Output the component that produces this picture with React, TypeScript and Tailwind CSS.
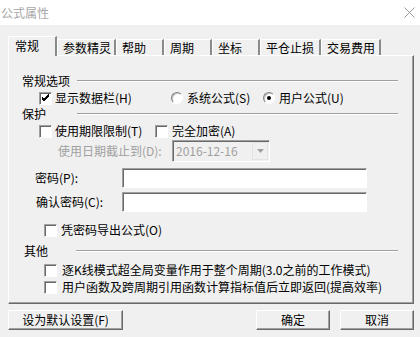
import React from "react";

const TABS = [
  { label: "常规", w: 49 },
  { label: "参数精灵", w: 59 },
  { label: "帮助", w: 48 },
  { label: "周期", w: 48 },
  { label: "坐标", w: 48 },
  { label: "平仓止损", w: 61 },
  { label: "交易费用", w: 60 },
];

function Box({ checked = false }: { checked?: boolean }) {
  return (
    <span className="flex h-[13px] w-[13px] shrink-0 items-center justify-center border border-t-[#a0a0a0] border-l-[#a0a0a0] border-b-white border-r-white bg-white shadow-[inset_1px_1px_0_#696969]">
      {checked && (
        <svg width="9" height="9" viewBox="0 0 9 9">
          <path d="M1 4 L3 6 L8 1 M1 5 L3 7 L8 2 M1 3 L3 5 L8 0" stroke="#000" strokeWidth="1" fill="none" />
        </svg>
      )}
    </span>
  );
}

function Radio({ on = false }: { on?: boolean }) {
  return (
    <span className="flex h-[12px] w-[12px] shrink-0 items-center justify-center rounded-full border border-t-[#808080] border-l-[#808080] border-b-white border-r-white bg-white shadow-[inset_1px_1px_0_#c0c0c0]">
      {on && <span className="h-[4px] w-[4px] rounded-full bg-black" />}
    </span>
  );
}

function Group({ title, ml }: { title: string; ml: number }) {
  return (
    <div className="flex h-full items-center" style={{ marginLeft: ml }}>
      <span>{title}</span>
    </div>
  );
}

function Header({ title, left, lineStart }: { title: string; left: number; lineStart: number }) {
  return (
    <div className="flex h-full items-center pr-[15px]">
      <span className="shrink-0" style={{ marginLeft: left - 9, width: lineStart - left }}>
        {title}
      </span>
      <span className="h-[2px] flex-1 border-t border-b border-t-[#a0a0a0] border-b-white" />
    </div>
  );
}

const raised =
  "border border-t-white border-l-white border-r-[#696969] border-b-[#696969] shadow-[inset_-1px_-1px_0_#a0a0a0]";
const sunken =
  "border border-t-[#a0a0a0] border-l-[#a0a0a0] border-b-white border-r-white shadow-[inset_1px_1px_0_#696969]";

export default function App() {
  return (
    <div className="relative h-[337px] w-[420px] overflow-hidden bg-[#f0f0f0] font-['Noto_Sans_CJK_SC',sans-serif] text-[12px] leading-[14px] text-black">
      {/* 标题栏 */}
      <div className="flex h-[25px] items-center justify-between bg-white pl-[1px] pr-[5px]">
        <span className="text-[12px] text-[#a8a8a8]">公式属性</span>
        <svg width="11" height="11" viewBox="0 0 11 11">
          <path d="M0.5 0.5 L10.5 10.5 M10.5 0.5 L0.5 10.5" stroke="#999" strokeWidth="1" />
        </svg>
      </div>

      {/* 选项卡 */}
      <div className="ml-[8px] mt-[11px] flex h-[19px] items-end">
        {TABS.map((t, i) =>
          i === 0 ? (
            <div
              key={t.label}
              className="relative z-10 -mb-px flex h-[20px] items-start border-t border-l border-white border-r-2 border-r-[#8a8a8a] bg-[#f0f0f0] pl-[6px] pt-[2px]"
              style={{ width: t.w }}
            >
              {t.label}
            </div>
          ) : (
            <div
              key={t.label}
              className="flex h-[16px] items-center border-t border-l border-white border-r-2 border-r-[#8a8a8a] pl-[5px]"
              style={{ width: t.w }}
            >
              {t.label}
            </div>
          ),
        )}
      </div>

      {/* 面板 */}
      <div className={`ml-[8px] flex h-[249px] w-[406px] flex-col ${raised}`}>
        <div className="mt-[16px] h-[18px]">
          <Header title="常规选项" left={22} lineStart={77} />
        </div>
        <div className="flex h-[16px] items-center">
          <div className="ml-[30px] flex w-[132px] items-center gap-[3px]">
            <Box checked />
            <span>显示数据栏(H)</span>
          </div>
          <div className="flex w-[92px] items-center gap-[4px]">
            <Radio />
            <span>系统公式(S)</span>
          </div>
          <div className="flex items-center gap-[4px]">
            <Radio on />
            <span>用户公式(U)</span>
          </div>
        </div>
        <div className="h-[16px]">
          <Header title="保护" left={22} lineStart={77} />
        </div>
        <div className="flex h-[18px] items-center">
          <div className="ml-[30px] flex w-[116px] items-center gap-[3px]">
            <Box />
            <span>使用期限限制(T)</span>
          </div>
          <div className="flex items-center gap-[4px]">
            <Box />
            <span>完全加密(A)</span>
          </div>
        </div>
        <div className="flex h-[22px] items-center">
          <span className="ml-[49px] w-[114px] text-[#a0a0a0]">使用日期截止到(D):</span>
          <div className={`flex h-[22px] w-[98px] items-center justify-between bg-[#f0f0f0] pl-[3px] pr-[1px] ${sunken}`}>
            <span className="text-[#a0a0a0]">2016-12-16</span>
            <span className="flex h-[18px] w-[16px] items-center justify-center border border-[#e3e3e3] bg-[#f0f0f0]">
              <svg width="7" height="4" viewBox="0 0 7 4">
                <path d="M0 0 H7 L3.5 4 Z" fill="#a0a0a0" />
              </svg>
            </span>
          </div>
        </div>
        <div className="mt-[6px] flex h-[20px] items-center">
          <span className="ml-[26px] w-[87px]">密码(P):</span>
          <div className={`h-[20px] w-[245px] bg-white ${sunken}`} />
        </div>
        <div className="mt-[4px] flex h-[20px] items-center">
          <span className="ml-[27px] w-[86px]">确认密码(C):</span>
          <div className={`h-[20px] w-[245px] bg-white ${sunken}`} />
        </div>
        <div className="mt-[8px] flex h-[20px] items-center gap-[4px] pl-[35px]">
          <Box />
          <span>凭密码导出公式(O)</span>
        </div>
        <div className="h-[22px]">
          <Header title="其他" left={24} lineStart={76} />
        </div>
        <div className="flex h-[16px] items-center gap-[5px] pl-[35px]">
          <Box />
          <span>逐K线模式超全局变量作用于整个周期(3.0之前的工作模式)</span>
        </div>
        <div className="flex h-[18px] items-center gap-[5px] pl-[35px]">
          <Box />
          <span>用户函数及跨周期引用函数计算指标值后立即返回(提高效率)</span>
        </div>
      </div>

      {/* 按钮 */}
      <div className="mt-[6px] flex h-[20px] items-center pl-[8px] pr-[6px]">
        <button className={`h-[20px] w-[115px] bg-[#f0f0f0] ${raised}`}>设为默认设置(F)</button>
        <div className="flex-1" />
        <button className={`h-[20px] w-[74px] bg-[#f0f0f0] ${raised}`}>确定</button>
        <button className={`ml-[10px] h-[20px] w-[74px] bg-[#f0f0f0] ${raised}`}>取消</button>
      </div>
    </div>
  );
}
